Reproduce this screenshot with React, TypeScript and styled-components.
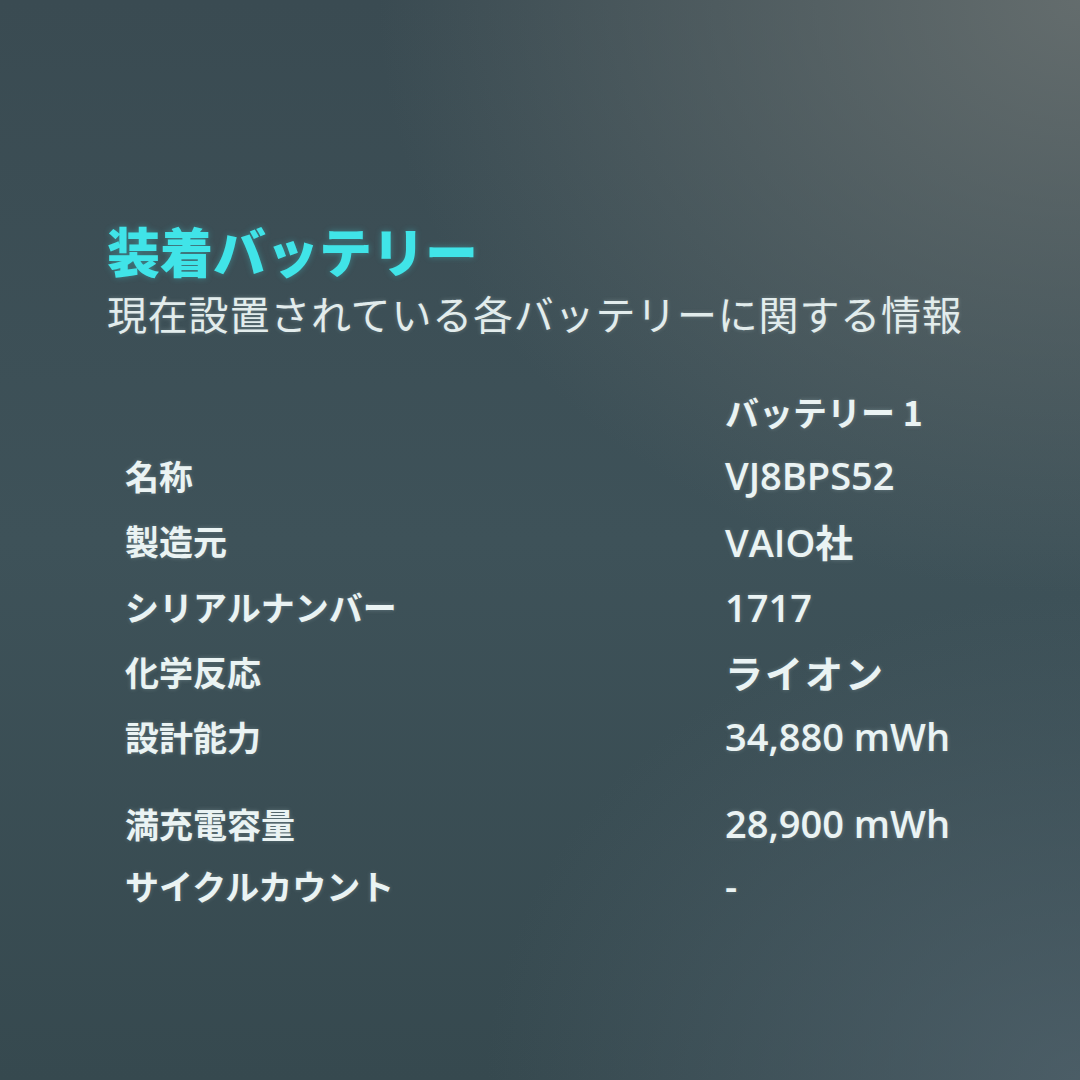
import React from 'react';
import styled, { createGlobalStyle } from 'styled-components';

const GlobalStyle = createGlobalStyle`
  html, body {
    margin: 0;
    padding: 0;
  }
  body {
    font-family: "Noto Sans CJK JP", "Noto Sans", sans-serif;
  }
`;

type Row = { label: string; value: string; big?: boolean; height?: number; gap?: number };

const rows: Row[] = [
  { label: '名称', value: 'VJ8BPS52', height: 64 },
  { label: '製造元', value: 'VAIO社', height: 67 },
  { label: 'シリアルナンバー', value: '1717', height: 65 },
  { label: '化学反応', value: 'ライオン', big: true, height: 64 },
  { label: '設計能力', value: '34,880 mWh', height: 66 },
  { label: '満充電容量', value: '28,900 mWh', height: 64, gap: 22 },
  { label: 'サイクルカウント', value: '-', height: 60 },
];

const BatteryInfo = () => {
  return (
    <Screen>
      <GlobalStyle />
      <Header>
        <Title>装着バッテリー</Title>
        <Subtitle>現在設置されている各バッテリーに関する情報</Subtitle>
      </Header>
      <Table>
        <TableRow $h={64}>
          <Label />
          <ColumnHead>バッテリー 1</ColumnHead>
        </TableRow>
        {rows.map((r) => (
          <TableRow key={r.label} $h={r.height} $gap={r.gap}>
            <Label>{r.label}</Label>
            <Value $big={r.big}>{r.value}</Value>
          </TableRow>
        ))}
      </Table>
    </Screen>
  );
};

export default BatteryInfo;

const Screen = styled.div`
  width: 1080px;
  height: 1080px;
  box-sizing: border-box;
  padding: 219px 0 0 107px;
  overflow: hidden;
  background:
    radial-gradient(ellipse 65% 55% at 100% 0%, rgba(104, 112, 112, 0.9), rgba(104, 112, 112, 0) 100%),
    radial-gradient(ellipse 55% 45% at 100% 100%, rgba(82, 100, 110, 0.75), rgba(82, 100, 110, 0) 100%),
    linear-gradient(180deg, #3a4b52 0%, #3e5259 50%, #36494f 100%);
`;

const Header = styled.div`
  display: flex;
  flex-direction: column;
  gap: 6px;
`;

const Title = styled.div`
  font-size: 53px;
  line-height: 62px;
  font-weight: 900;
  color: #40e4e8;
  text-shadow: 0 0 6px rgba(70, 230, 235, 0.35);
`;

const Subtitle = styled.div`
  font-size: 40px;
  line-height: 52px;
  font-weight: 400;
  color: #e2ecec;
  letter-spacing: 0.8px;
  text-shadow: 0 0 4px rgba(220, 240, 240, 0.25);
`;

const Table = styled.div`
  margin-top: 40px;
  margin-left: 18px;
  display: flex;
  flex-direction: column;
`;

const TableRow = styled.div<{ $h?: number; $gap?: number }>`
  display: grid;
  grid-template-columns: 600px auto;
  align-items: center;
  height: ${(p) => p.$h ?? 65}px;
  margin-top: ${(p) => p.$gap ?? 0}px;
`;

const Label = styled.div`
  font-size: 34px;
  font-weight: 700;
  color: #eaf3f3;
  text-shadow: 0 0 4px rgba(220, 240, 240, 0.25);
`;

const ColumnHead = styled.div`
  font-size: 34px;
  font-weight: 700;
  color: #eaf3f3;
  text-shadow: 0 0 4px rgba(220, 240, 240, 0.25);
`;

const Value = styled.div<{ $big?: boolean }>`
  font-family: "Open Sans", "Noto Sans CJK JP", sans-serif;
  font-size: 38px;
  font-weight: ${(p) => (p.$big ? 700 : 600)};
  color: #eaf3f3;
  letter-spacing: ${(p) => (p.$big ? '2px' : '0')};
  text-shadow: 0 0 4px rgba(220, 240, 240, 0.25);
`;
